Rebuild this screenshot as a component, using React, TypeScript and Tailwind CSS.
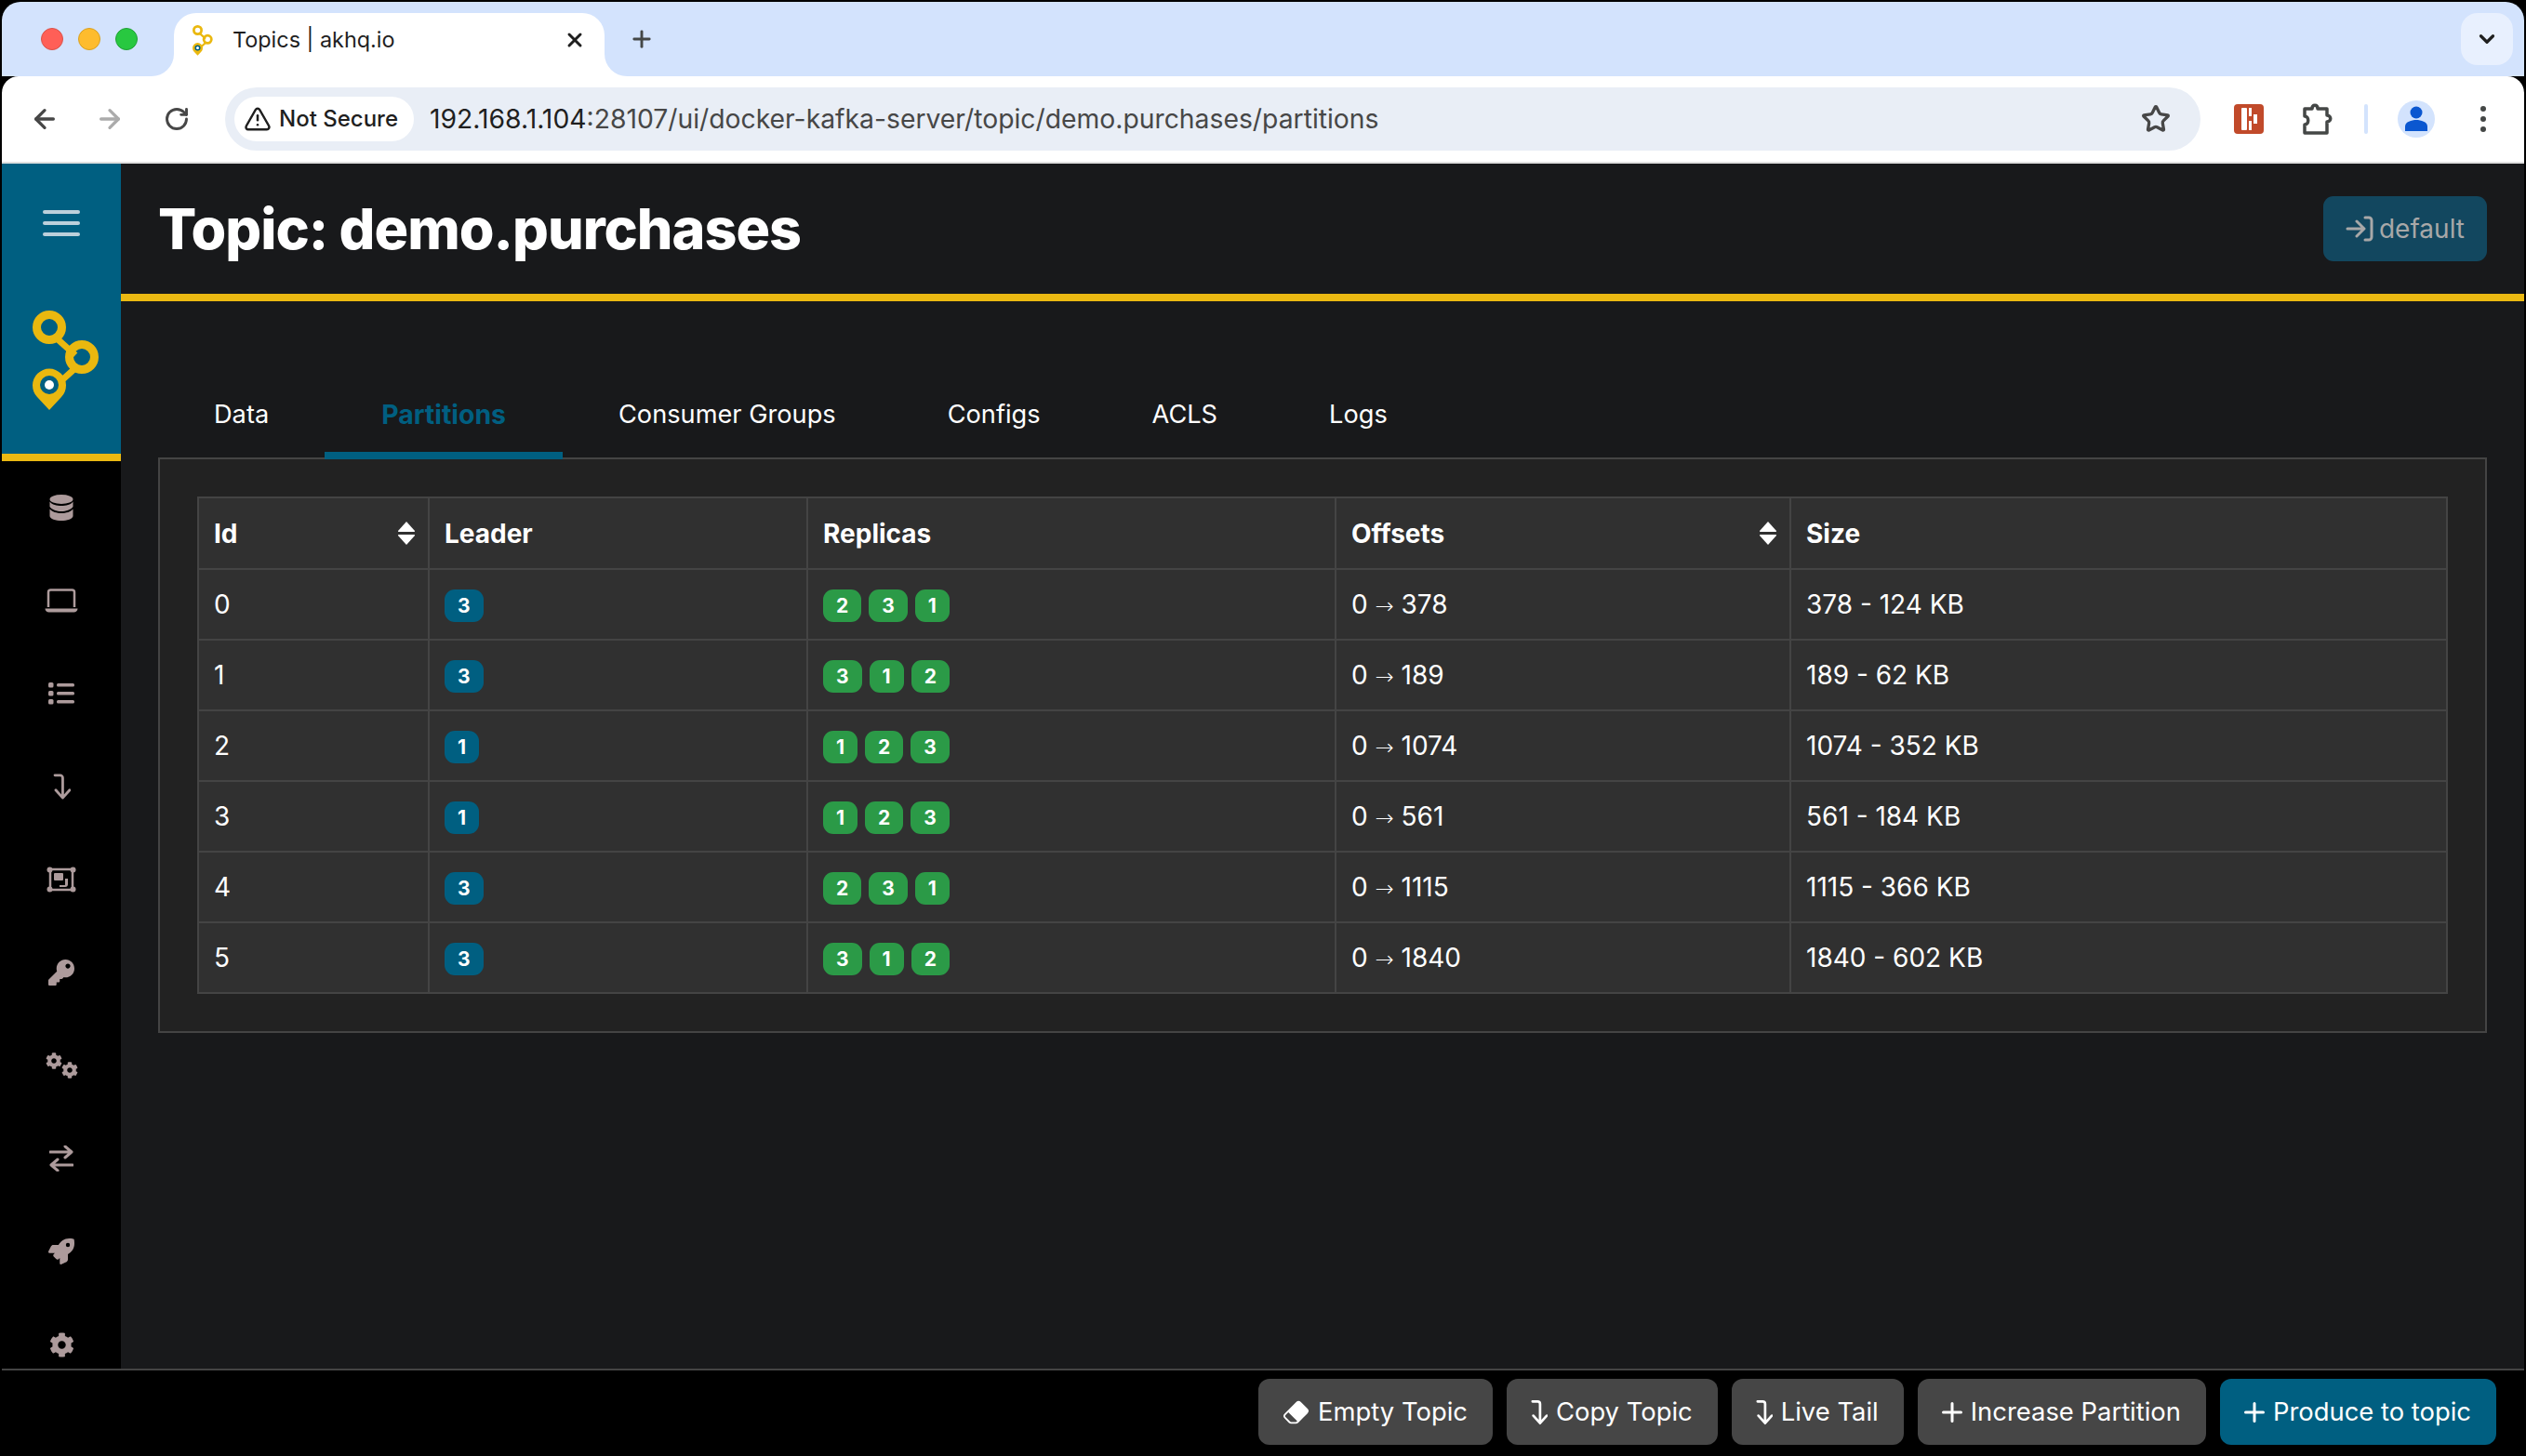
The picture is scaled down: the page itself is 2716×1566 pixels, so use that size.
import { ArrowLeft, ArrowRight, ChevronDown, Plus, RotateCw, Star, TriangleAlert, X } from 'lucide-react';
import { BsEraserFill } from 'react-icons/bs';
import { FaCog, FaKey, FaRocket } from 'react-icons/fa';

const partitions = [
  { id: 0, leader: 3, replicas: [2, 3, 1], offsets: '378', size: '378 - 124 KB' },
  { id: 1, leader: 3, replicas: [3, 1, 2], offsets: '189', size: '189 - 62 KB' },
  { id: 2, leader: 1, replicas: [1, 2, 3], offsets: '1074', size: '1074 - 352 KB' },
  { id: 3, leader: 1, replicas: [1, 2, 3], offsets: '561', size: '561 - 184 KB' },
  { id: 4, leader: 3, replicas: [2, 3, 1], offsets: '1115', size: '1115 - 366 KB' },
  { id: 5, leader: 3, replicas: [3, 1, 2], offsets: '1840', size: '1840 - 602 KB' },
];

const tabs = ['Data', 'Partitions', 'Consumer Groups', 'Configs', 'ACLS', 'Logs'];

function Logo({ size = 72 }: { size?: number }) {
  return (
    <svg width={size} height={size * 1.5} viewBox="0 0 72 108">
      <g fill="none" stroke="#eab80f">
        <path d="M26 30 L46 48 M46 62 L26 80" strokeWidth="7" />
        <circle cx="18" cy="18" r="13.5" strokeWidth="9" />
        <circle cx="53" cy="50" r="13.5" strokeWidth="9" />
      </g>
      <path d="M18 107 L5 93 A18 18 0 1 1 31 93 Z" fill="#eab80f" />
      <circle cx="18" cy="80" r="10" fill="#005f81" />
      <circle cx="18" cy="80" r="5" fill="#fff" />
    </svg>
  );
}

function ReturnArrow({ className }: { className?: string }) {
  return (
    <svg viewBox="0 0 20 30" className={className} fill="none" stroke="currentColor" strokeWidth="3" strokeLinecap="round" strokeLinejoin="round">
      <path d="M2 2 H8 A3 3 0 0 1 11 5 V27 M3 19 L11 28 L19 19" />
    </svg>
  );
}

function DatabaseIcon() {
  return (
    <svg width="26" height="28" viewBox="0 0 26 28" fill="currentColor">
      <ellipse cx="13" cy="5" rx="12.500" ry="5" />
      <path d="M0.500 7.500 C3 11 8 12 13 12 C18 12 23 11 25.500 7.500 V13 C23 16.500 18 18 13 18 C8 18 3 16.500 0.500 13 Z" />
      <path d="M0.500 15.500 C3 18.500 8 20 13 20 C18 20 23 18.500 25.500 15.500 V23 C25.500 26 19 28 13 28 C7 28 0.500 26 0.500 23 Z" />
    </svg>
  );
}

function LaptopIcon() {
  return (
    <svg width="36" height="26" viewBox="0 0 36 26" fill="none" stroke="currentColor">
      <path d="M4 20 V4 A2.500 2.500 0 0 1 6.500 1.500 H29.500 A2.500 2.500 0 0 1 32 4 V20" strokeWidth="2.500" />
      <path d="M0.500 21.500 H35.500 A4 4 0 0 1 31 25.500 H5 A4 4 0 0 1 0.500 21.500 Z" fill="currentColor" strokeWidth="0" />
    </svg>
  );
}

function ListIcon() {
  return (
    <svg width="28" height="24" viewBox="0 0 28 24" fill="currentColor" stroke="none">
      <rect x="0" y="0" width="5.500" height="5.500" rx="1.500" />
      <rect x="0" y="9" width="5.500" height="5.500" rx="1.500" />
      <rect x="0" y="18" width="5.500" height="5.500" rx="1.500" />
      <rect x="9" y="1" width="19" height="3.500" rx="1.500" />
      <rect x="9" y="10" width="19" height="3.500" rx="1.500" />
      <rect x="9" y="19" width="19" height="3.500" rx="1.500" />
    </svg>
  );
}

function GroupIcon() {
  return (
    <svg width="32" height="28" viewBox="0 0 32 28" fill="currentColor">
      <rect x="4" y="3" width="24" height="22" fill="none" stroke="currentColor" strokeWidth="2.5" />
      <circle cx="3.5" cy="3.5" r="3" />
      <circle cx="28.5" cy="3.5" r="3" />
      <circle cx="3.5" cy="24.5" r="3" />
      <circle cx="28.5" cy="24.5" r="3" />
      <rect x="8" y="7" width="10" height="8" rx="1" />
      <path d="M14 20 H20 V13 H23 V19 A3 3 0 0 1 20 22 H14 Z" />
    </svg>
  );
}

function ExchangeIcon() {
  return (
    <svg width="26" height="28" viewBox="0 0 26 28" fill="none" stroke="currentColor" strokeWidth="3" strokeLinecap="round" strokeLinejoin="round">
      <path d="M1 7 H24 M17 1 L24 7 L17 13 M25 21 H2 M9 15 L2 21 L9 27" />
    </svg>
  );
}

function SortIcon() {
  return (
    <svg width="20" height="25" viewBox="0 0 20 25" fill="#fff" className="-mr-[3px]">
      <path d="M10 0 L19 10 Q19.5 11 18 11 H2 Q0.500 11 1 10 Z" />
      <path d="M10 25 L19 15 Q19.5 14 18 14 H2 Q0.500 14 1 15 Z" />
    </svg>
  );
}

function PlusIcon() {
  return (
    <svg width="22" height="22" viewBox="0 0 22 22" stroke="currentColor" strokeWidth="3" strokeLinecap="round">
      <path d="M11 1.500 V20.500 M1.500 11 H20.500" />
    </svg>
  );
}

function Sidebar() {
  const icon = 'flex h-[100px] shrink-0 items-center justify-center';
  return (
    <div className="flex w-[128px] shrink-0 flex-col overflow-hidden bg-black text-[#ad9b9c]">
      <div className="flex h-[312px] shrink-0 flex-col items-center bg-[#005f81]">
        <div className="flex h-[128px] w-[40px] flex-col justify-center gap-[8px]">
          <div className="h-[4px] rounded-full bg-[#bcd0db]" />
          <div className="h-[4px] rounded-full bg-[#bcd0db]" />
          <div className="h-[4px] rounded-full bg-[#bcd0db]" />
        </div>
        <div className="mt-[30px] ml-[10px]">
          <Logo />
        </div>
      </div>
      <div className="h-[8px] shrink-0 bg-[#ebb912]" />
      <div className={icon}><DatabaseIcon /></div>
      <div className={icon}><LaptopIcon /></div>
      <div className={icon}><ListIcon /></div>
      <div className={icon}><ReturnArrow className="h-[28px] w-[19px]" /></div>
      <div className={icon}><GroupIcon /></div>
      <div className={icon}><FaKey size={28} /></div>
      <div className={icon}>
        <div className="flex h-[28px] w-[35px]">
          <FaCog size={18} className="self-start" />
          <FaCog size={18} className="-ml-[1px] self-end" />
        </div>
      </div>
      <div className={icon}><ExchangeIcon /></div>
      <div className={icon}><FaRocket size={28} /></div>
      <div className={icon}><FaCog size={27} /></div>
    </div>
  );
}

function TabStrip() {
  return (
    <div className="flex h-[80px] shrink-0 items-start bg-[#d3e3fd] pr-[12px]">
      <div className="flex h-[80px] w-[185px] shrink-0 items-center gap-[16px] pl-[42px]">
        <div className="h-[24px] w-[24px] rounded-full border border-[#d9534a] bg-[#ff5f57]" />
        <div className="h-[24px] w-[24px] rounded-full border border-[#d9a020] bg-[#febc2e]" />
        <div className="h-[24px] w-[24px] rounded-full border border-[#20a035] bg-[#28c840]" />
      </div>
      <div className="relative mt-[12px] flex h-[68px] w-[463px] shrink-0 items-center rounded-t-[24px] bg-white pr-[20px] pb-[10px] pl-[20px]">
        <div className="absolute bottom-0 -left-[24px] h-[24px] w-[24px] bg-white">
          <div className="h-full w-full rounded-br-[24px] bg-[#d3e3fd]" />
        </div>
        <div className="absolute -right-[24px] bottom-0 h-[24px] w-[24px] bg-white">
          <div className="h-full w-full rounded-bl-[24px] bg-[#d3e3fd]" />
        </div>
        <Logo size={22} />
        <span className="ml-[21px] flex-1 font-['Inter'] text-[23.4px] text-[#1f1f1f]">Topics | akhq.io</span>
        <X size={24} strokeWidth={3} className="text-[#1f1f1f]" />
      </div>
      <Plus size={28} strokeWidth={2.5} className="mt-[26px] ml-[26px] text-[#444746]" />
      <div className="flex-1" />
      <div className="mt-[12px] flex h-[56px] w-[56px] items-center justify-center rounded-[18px] bg-[#e8f0fe]">
        <ChevronDown size={26} strokeWidth={3} className="text-[#1f1f1f]" />
      </div>
    </div>
  );
}

function Toolbar() {
  return (
    <div className="flex h-[94px] shrink-0 items-center rounded-t-[18px] border-b-2 border-[#e0e0e0] bg-white pr-[20px] pl-[30px]">
      <ArrowLeft size={32} strokeWidth={2.5} className="text-[#474747]" />
      <ArrowRight size={32} strokeWidth={2.5} className="ml-[38px] text-[#ababab]" />
      <RotateCw size={28} strokeWidth={2.5} className="ml-[42px] text-[#474747]" />
      <div className="ml-[38px] flex h-[68px] w-[2124px] shrink-0 items-center rounded-full bg-[#e9eef6] pr-[32px] pl-[10px]">
        <div className="flex h-[48px] w-[193px] items-center gap-[8px] rounded-full bg-white pl-[10px]">
          <TriangleAlert size={30} strokeWidth={2} className="text-[#1f1f1f]" />
          <span className="font-['Inter'] text-[24px] font-medium whitespace-nowrap text-[#1f1f1f]">Not Secure</span>
        </div>
        <div className="ml-[17px] flex-1 font-['Inter'] text-[28.3px] whitespace-nowrap text-[#474747]">
          <span className="text-[#1f1f1f]">192.168.1.104</span>:28107/ui/docker-kafka-server/topic/demo.purchases/partitions
        </div>
        <Star size={32} strokeWidth={2.5} className="text-[#474747]" />
      </div>
      <div className="ml-[36px] flex h-[32px] w-[32px] shrink-0 items-center justify-center rounded-[4px] bg-[#c14a2a]">
        <svg width="18" height="24" viewBox="0 0 18 24" fill="#fff">
          <rect x="1" y="0" width="6" height="24" rx="1" />
          <rect x="9" y="0" width="3" height="9" />
          <rect x="9" y="14" width="3" height="10" />
          <rect x="14" y="7" width="4" height="10" />
        </svg>
      </div>
      <svg width="34" height="36" viewBox="0 0 34 36" fill="none" stroke="#444746" strokeWidth="3.500" className="ml-[40px] shrink-0">
        <path d="M4 7 H12 C12 2 18 2 18 7 H28 V14 C33 14 33 21 28 21 V33 H4 V24 C9 24 9 15 4 15 Z" strokeLinejoin="round" />
      </svg>
      <div className="ml-[34px] h-[32px] w-[4px] shrink-0 rounded-full bg-[#d3e3fd]" />
      <div className="ml-[32px] flex h-[40px] w-[40px] shrink-0 items-center justify-center rounded-full bg-[#d3e3fd]">
        <svg width="26" height="28" viewBox="0 0 26 28" fill="#0b57d0">
          <circle cx="13" cy="7" r="6.500" />
          <path d="M1 27 V22 C1 17 8 15 13 15 C18 15 25 17 25 22 V27 Z" />
        </svg>
      </div>
      <div className="ml-[49px] flex shrink-0 flex-col gap-[5px]">
        <div className="h-[6px] w-[6px] rounded-full bg-[#444746]" />
        <div className="h-[6px] w-[6px] rounded-full bg-[#444746]" />
        <div className="h-[6px] w-[6px] rounded-full bg-[#444746]" />
      </div>
    </div>
  );
}

function Badge({ value, color }: { value: number; color: string }) {
  return (
    <span className={`flex h-[35px] items-center rounded-[11px] px-[14px] text-[21px] font-bold text-white ${color}`}>
      {value}
    </span>
  );
}

function PartitionTable() {
  const cell = 'border-2 border-[#444] px-[16px]';
  return (
    <table className="w-full table-fixed border-collapse bg-[#303030] text-white">
      <colgroup>
        <col className="w-[248px]" />
        <col className="w-[407px]" />
        <col className="w-[568px]" />
        <col className="w-[489px]" />
        <col />
      </colgroup>
      <thead>
        <tr className="h-[77px] text-left font-bold">
          <th className={cell}>
            <div className="flex items-center justify-between">Id <SortIcon /></div>
          </th>
          <th className={cell}>Leader</th>
          <th className={cell}>Replicas</th>
          <th className={cell}>
            <div className="flex items-center justify-between">Offsets <SortIcon /></div>
          </th>
          <th className={cell}>Size</th>
        </tr>
      </thead>
      <tbody>
        {partitions.map((p) => (
          <tr key={p.id} className="h-[76px]">
            <td className={cell}>{p.id}</td>
            <td className={cell}>
              <div className="mt-[3px] flex">
                <Badge value={p.leader} color="bg-[#005f81]" />
              </div>
            </td>
            <td className={cell}>
              <div className="mt-[3px] flex gap-[8px]">
                {p.replicas.map((r) => (
                  <Badge key={r} value={r} color="bg-[#2b9a47]" />
                ))}
              </div>
            </td>
            <td className={cell}>
              0 <span className="font-['DejaVu_Sans'] text-[24px] font-light">→</span> {p.offsets}
            </td>
            <td className={cell}>{p.size}</td>
          </tr>
        ))}
      </tbody>
    </table>
  );
}

function ActionButton({ children, primary }: { children: React.ReactNode; primary?: boolean }) {
  return (
    <button className={`flex h-[71px] items-center gap-[9px] rounded-[12px] pr-[27px] pl-[26px] text-[27.4px] whitespace-nowrap text-white ${primary ? 'bg-[#005f81]' : 'bg-[#464646]'}`}>
      {children}
    </button>
  );
}

export default function App() {
  return (
    <div className="h-[1566px] w-[2716px] overflow-hidden bg-black p-[2px] pb-0 font-['Inter',sans-serif] text-[28px]">
      <div className="flex h-full flex-col overflow-hidden rounded-[20px] bg-black">
        <TabStrip />
        <Toolbar />
        <div className="flex min-h-0 flex-1">
          <Sidebar />
          <div className="min-w-0 flex-1 bg-[#18191b] pr-[40px]">
            <div className="-mr-[40px] flex h-[148px] items-center justify-between border-b-8 border-[#ebb912] pr-[40px] pl-[40px]">
              <h1 className="pt-[2px] text-[61px] font-extrabold tracking-[-1px] text-white">Topic: demo.purchases</h1>
              <div className="flex h-[70px] items-center gap-[6px] rounded-[11px] bg-[#12475f] px-[24px] text-[#a8a8a8]">
                <svg width="30" height="28" viewBox="0 0 30 28" fill="none" stroke="currentColor" strokeWidth="3" strokeLinecap="round" strokeLinejoin="round">
                  <path d="M2 14 H19 M12 6 L20 14 L12 22 M21 2 H25 A3 3 0 0 1 28 5 V23 A3 3 0 0 1 25 26 H21" />
                </svg>
                default
              </div>
            </div>
            <div className="relative z-10 mt-[84px] -mb-[2px] ml-[40px] flex text-[27.2px] text-white">
              {tabs.map((t) => (
                <div
                  key={t}
                  className={`flex h-[86px] items-center border-b-8 pb-[2px] ${t === 'Partitions' ? 'border-[#005f81] px-[61px] text-[28.4px] font-bold text-[#005f81]' : 'border-transparent px-[60px]'}`}
                >
                  {t}
                </div>
              ))}
            </div>
            <div className="ml-[40px] border-2 border-[#444] bg-[#222] p-[40px]">
              <PartitionTable />
            </div>
          </div>
        </div>
        <div className="flex h-[94px] shrink-0 items-start justify-end gap-[15px] border-t-2 border-[#444] bg-black pt-[9px] pr-[30px]">
          <ActionButton><BsEraserFill size={29} />Empty Topic</ActionButton>
          <ActionButton><ReturnArrow className="h-[28px] w-[18px]" />Copy Topic</ActionButton>
          <ActionButton><ReturnArrow className="h-[28px] w-[18px]" />Live Tail</ActionButton>
          <ActionButton><PlusIcon />Increase Partition</ActionButton>
          <ActionButton primary><PlusIcon />Produce to topic</ActionButton>
        </div>
      </div>
    </div>
  );
}
